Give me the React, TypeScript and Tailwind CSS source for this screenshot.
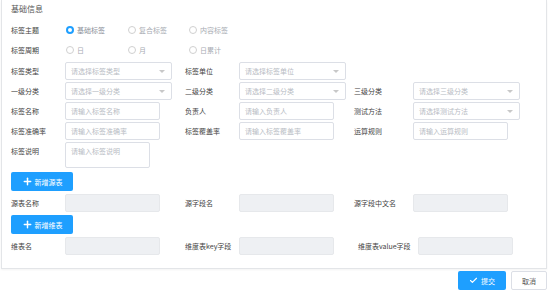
import React from "react";
import { Check, Plus } from "lucide-react";

const font = { fontFamily: '"Noto Sans CJK SC", "Noto Sans", sans-serif' };

function Label({ w, children }: { w: string; children: React.ReactNode }) {
  return <span className={`${w} shrink-0 text-[7px] leading-[10px] text-[#444] whitespace-nowrap`}>{children}</span>;
}

function Select({ placeholder, w = "w-[107px]" }: { placeholder: string; w?: string }) {
  return (
    <div className={`${w} h-[18px] shrink-0 border border-[#dcdfe6] rounded-[2px] bg-white flex items-center justify-between pl-[5px] pr-[6px]`}>
      <span className="text-[7px] leading-[10px] text-[#b8bcc4] whitespace-nowrap">{placeholder}</span>
      <span className="w-0 h-0 border-l-[3px] border-r-[3px] border-t-[3px] border-l-transparent border-r-transparent border-t-[#c8c8c8]" />
    </div>
  );
}

function Input({ placeholder, w = "w-[95px]" }: { placeholder: string; w?: string }) {
  return (
    <div className={`${w} h-[18px] shrink-0 border border-[#dcdfe6] rounded-[2px] bg-white flex items-center pl-[5px]`}>
      <span className="text-[7px] leading-[10px] text-[#b8bcc4] whitespace-nowrap">{placeholder}</span>
    </div>
  );
}

function Disabled({ w = "w-[95px]" }: { w?: string }) {
  return <div className={`${w} h-[18px] shrink-0 border border-[#e6e8eb] rounded-[2px] bg-[#eef0f3]`} />;
}

function Cell({ w, children }: { w: string; children: React.ReactNode }) {
  return <div className={`${w} shrink-0 flex items-center`}>{children}</div>;
}

function Radio({ checked, label, w }: { checked?: boolean; label: string; w: string }) {
  return (
    <div className={`${w} shrink-0 flex items-center gap-[3px]`}>
      {checked ? (
        <span className="w-[8px] h-[8px] rounded-full border-[2.5px] border-[#1e9fff] bg-white" />
      ) : (
        <span className="w-[8px] h-[8px] rounded-full border border-[#d0d0d0] bg-white" />
      )}
      <span className={`text-[7px] leading-[10px] ${checked ? "text-[#8a8f99]" : "text-[#a8acb3]"}`}>{label}</span>
    </div>
  );
}

function BlueButton({ children }: { children: React.ReactNode }) {
  return (
    <div className="w-[62px] h-[19px] rounded-[2px] bg-[#1e9fff] flex items-center justify-center gap-[2px] text-white">
      <Plus size={11} strokeWidth={3.2} />
      <span className="text-[7px] leading-[10px]">{children}</span>
    </div>
  );
}

export default function App() {
  return (
    <div className="w-[553px] h-[295px] bg-white overflow-hidden leading-none" style={font}>
      <div className="ml-px w-[546px] h-[269px] border-x border-b border-[#e3e5e8] shadow-[0_1px_2px_rgba(0,0,0,0.05)] px-[9px]">
        <div className="h-[18px] flex items-center text-[8px] leading-[10px] text-[#555]">基础信息</div>

        <div className="mt-[2px] h-[20px] flex items-center">
          <Label w="w-[55px]">标签主题</Label>
          <Radio checked label="基础标签" w="w-[62px]" />
          <Radio label="复合标签" w="w-[61px]" />
          <Radio label="内容标签" w="w-[62px]" />
        </div>
        <div className="h-[20px] flex items-center">
          <Label w="w-[55px]">标签周期</Label>
          <Radio label="日" w="w-[62px]" />
          <Radio label="月" w="w-[61px]" />
          <Radio label="日累计" w="w-[62px]" />
        </div>

        <div className="mt-[2px] h-[18px] flex items-center">
          <Label w="w-[54px]">标签类型</Label>
          <Cell w="w-[120px]"><Select placeholder="请选择标签类型" /></Cell>
          <Label w="w-[54px]">标签单位</Label>
          <Cell w="w-[115px]"><Select placeholder="请选择标签单位" /></Cell>
        </div>
        <div className="mt-[2px] h-[18px] flex items-center">
          <Label w="w-[54px]">一级分类</Label>
          <Cell w="w-[120px]"><Select placeholder="请选择一级分类" /></Cell>
          <Label w="w-[54px]">二级分类</Label>
          <Cell w="w-[115px]"><Select placeholder="请选择二级分类" /></Cell>
          <Label w="w-[59px]">三级分类</Label>
          <Select placeholder="请选择三级分类" />
        </div>
        <div className="mt-[2px] h-[18px] flex items-center">
          <Label w="w-[54px]">标签名称</Label>
          <Cell w="w-[120px]"><Input placeholder="请输入标签名称" /></Cell>
          <Label w="w-[54px]">负责人</Label>
          <Cell w="w-[115px]"><Input placeholder="请输入负责人" /></Cell>
          <Label w="w-[59px]">测试方法</Label>
          <Select placeholder="请选择测试方法" />
        </div>
        <div className="mt-[2px] h-[18px] flex items-center">
          <Label w="w-[54px]">标签准确率</Label>
          <Cell w="w-[120px]"><Input placeholder="请输入标签准确率" /></Cell>
          <Label w="w-[54px]">标签覆盖率</Label>
          <Cell w="w-[115px]"><Input placeholder="请输入标签覆盖率" /></Cell>
          <Label w="w-[59px]">运算规则</Label>
          <Input placeholder="请输入运算规则" />
        </div>
        <div className="mt-[2px] h-[26px] flex items-start">
          <span className="w-[54px] shrink-0 pt-[4px] text-[7px] leading-[10px] text-[#444]">标签说明</span>
          <div className="w-[85px] h-[26px] border border-[#dcdfe6] rounded-[2px] bg-white pl-[5px] pt-[3px] text-[7px] leading-[10px]">
            <span className="text-[#b8bcc4] whitespace-nowrap">请输入标签说明</span>
          </div>
        </div>

        <div className="mt-[4px]">
          <BlueButton>新增源表</BlueButton>
        </div>
        <div className="mt-[3px] h-[18px] flex items-center">
          <Label w="w-[54px]">源表名称</Label>
          <Cell w="w-[120px]"><Disabled /></Cell>
          <Label w="w-[54px]">源字段名</Label>
          <Cell w="w-[115px]"><Disabled /></Cell>
          <Label w="w-[59px]">源字段中文名</Label>
          <Disabled />
        </div>

        <div className="mt-[3px]">
          <BlueButton>新增维表</BlueButton>
        </div>
        <div className="mt-[3px] h-[18px] flex items-center">
          <Label w="w-[54px]">维表名</Label>
          <Cell w="w-[120px]"><Disabled /></Cell>
          <Label w="w-[54px]">维度表key字段</Label>
          <Cell w="w-[119px]"><Disabled /></Cell>
          <Label w="w-[60px]">维度表value字段</Label>
          <Disabled />
        </div>
      </div>

      <div className="w-[547px] mt-[2px] flex justify-end gap-[5px]">
        <div className="w-[48px] h-[19px] rounded-[2px] bg-[#1e9fff] flex items-center justify-center gap-[3px] text-white">
          <Check size={9} strokeWidth={3} />
          <span className="text-[7px] leading-[10px]">提交</span>
        </div>
        <div className="w-[36px] h-[19px] rounded-[2px] bg-white border border-[#dcdfe6] flex items-center justify-center">
          <span className="text-[7px] leading-[10px] text-[#555]">取消</span>
        </div>
      </div>
    </div>
  );
}
